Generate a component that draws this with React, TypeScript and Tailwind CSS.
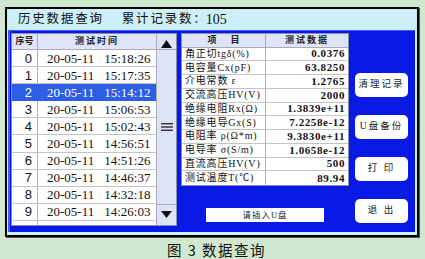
import React from "react";

const rowsL = [
  ["0", "20-05-11", "15:18:26"],
  ["1", "20-05-11", "15:17:35"],
  ["2", "20-05-11", "15:14:12"],
  ["3", "20-05-11", "15:06:53"],
  ["4", "20-05-11", "15:02:43"],
  ["5", "20-05-11", "14:56:51"],
  ["6", "20-05-11", "14:51:26"],
  ["7", "20-05-11", "14:46:37"],
  ["8", "20-05-11", "14:32:18"],
  ["9", "20-05-11", "14:26:03"],
];

const rowsR = [
  ["角正切tgδ(%)", "0.0376"],
  ["电容量Cx(pF)", "63.8250"],
  ["介电常数 ε", "1.2765"],
  ["交流高压HV(V)", "2000"],
  ["绝缘电阻Rx(Ω)", "1.3839e+11"],
  ["绝缘电导Gx(S)", "7.2258e-12"],
  ["电阻率 ρ(Ω*m)", "9.3830e+11"],
  ["电导率 σ(S/m)", "1.0658e-12"],
  ["直流高压HV(V)", "500"],
  ["测试温度T(℃)", "89.94"],
];

const serif = { fontFamily: '"Liberation Serif", "Noto Sans CJK SC", serif' };

function Btn({ label }: { label: string }) {
  return (
    <div className="h-[24px] w-[53px] bg-white rounded-[5px] flex items-center justify-center text-[9.5px] tracking-[2px] text-[#222] leading-none">
      {label}
    </div>
  );
}

export default function App() {
  return (
    <div className="w-[425px] h-[259px] bg-[#d0e8d0] overflow-hidden" style={serif}>
      <div className="h-[7px]" />
      <div className="ml-[5px] w-[414px] h-[230px] border-2 border-black bg-[#cdeff8] flex flex-col shadow-[1px_1px_0_#555]">
        <div className="h-[21px] flex items-center pl-[11px] text-[12.5px] text-[#111] leading-none">
          <span className="tracking-[1.8px]">历史数据查询</span>
          <span className="ml-[18px] tracking-[1.8px]">累计记录数</span>
          <span>：</span>
          <span className="text-[14px]">105</span>
        </div>
        <div className="ml-[1px] mr-[2px] h-[202px] bg-[#0a1ae6] border-l-2 border-t border-[#3b5cff] flex pt-[2px] pl-[1px]">
          {/* left table */}
          <div className="w-[166px] h-[193px] flex bg-white border border-[#8890a8] leading-none">
            <div className="w-[145px] flex flex-col">
              <div className="h-[16px] shrink-0 flex bg-[#dfe4f8] border-b border-[#a8acb8] text-[9px] font-bold text-[#222]">
                <div className="w-[26px] border-r border-[#a8acb8] flex items-center justify-center">序号</div>
                <div className="flex-1 flex items-center justify-center tracking-[2px]">测试时间</div>
              </div>
              {rowsL.map((r, i) => {
                const sel = i === 2;
                return (
                  <div
                    key={i}
                    className={
                      "h-[17.1px] shrink-0 flex border-b " +
                      (sel ? "bg-[#2d5fe6] text-white border-[#2d5fe6]" : "text-[#111] border-[#c4c4c4]")
                    }
                  >
                    <div
                      className={
                        "w-[26px] flex items-center justify-end pr-[5px] text-[13px] border-r " +
                        (sel ? "border-[#2d5fe6]" : "border-[#b0b0b0]")
                      }
                      style={{ fontFamily: '"Liberation Sans", sans-serif' }}
                    >
                      {r[0]}
                    </div>
                    <div className="flex-1 flex items-center pl-[9px] text-[13px]">
                      <span>{r[1]}</span>
                      <span className="ml-[10px]">{r[2]}</span>
                    </div>
                  </div>
                );
              })}
              <div className="flex-1 flex">
                <div className="w-[26px] border-r border-[#b0b0b0]" />
              </div>
            </div>
            <div className="w-[20px] bg-[#dde2f6] border-l border-[#a8acb8] flex flex-col">
              <div className="h-[16px] border-b border-[#a8acb8] flex items-end justify-center pb-[1px]">
                <svg width="11" height="8" viewBox="0 0 11 8"><polygon points="5.5,0 11,8 0,8" fill="#111" /></svg>
              </div>
              <div className="flex-1 flex items-center justify-center">
                <svg width="12" height="8" viewBox="0 0 12 8">
                  <rect x="0" y="0" width="12" height="1.4" fill="#333" />
                  <rect x="0" y="3.3" width="12" height="1.4" fill="#333" />
                  <rect x="0" y="6.6" width="12" height="1.4" fill="#333" />
                </svg>
              </div>
              <div className="h-[21px] border-t border-[#a8acb8] flex items-start justify-center pt-[6px]">
                <svg width="11" height="7" viewBox="0 0 11 7"><polygon points="0,0 11,0 5.5,7" fill="#111" /></svg>
              </div>
            </div>
          </div>
          {/* middle */}
          <div className="ml-[4px] w-[168px] flex flex-col leading-none">
            <div className="h-[153px] bg-white border border-[#8890a8] flex flex-col overflow-hidden">
              <div className="h-[13.5px] shrink-0 flex bg-[#dfe4f8] border-b border-[#a8acb8] text-[9px] font-bold text-[#222]">
                <div className="w-[84px] border-r border-[#a8acb8] flex items-center justify-center tracking-[14px] pl-[14px]">项目</div>
                <div className="flex-1 flex items-center justify-center tracking-[2px]">测试数据</div>
              </div>
              {rowsR.map((r, i) => (
                <div key={i} className="h-[13.75px] shrink-0 flex border-b border-[#c4c4c4] last:border-b-0 text-[#111] overflow-hidden">
                  <div className="w-[84px] border-r border-[#b0b0b0] flex items-center pl-[3px] text-[10px] tracking-[0.8px] whitespace-nowrap overflow-hidden">
                    {r[0]}
                  </div>
                  <div className="flex-1 flex items-center justify-end pr-[3px] text-[11px] font-bold tracking-[0.6px]">
                    {r[1]}
                  </div>
                </div>
              ))}
            </div>
            <div className="mt-[22px] ml-[25px] w-[118px] h-[14px] bg-white flex items-center justify-center text-[8.5px] tracking-[1px] text-[#222]">
              请插入U盘
            </div>
          </div>
          {/* buttons */}
          <div className="ml-[6px] flex flex-col gap-[18px] pt-[40px]">
            <Btn label="清理记录" />
            <Btn label="U盘备份" />
            <Btn label="打  印" />
            <Btn label="退  出" />
          </div>
        </div>
      </div>
      <div className="flex justify-center mt-[2px] text-[14.5px] text-[#111] tracking-[1.5px] pl-[8px]" style={{ fontFamily: '"Noto Sans CJK SC", sans-serif' }}>
        <span>图 3 数据查询</span>
      </div>
    </div>
  );
}
